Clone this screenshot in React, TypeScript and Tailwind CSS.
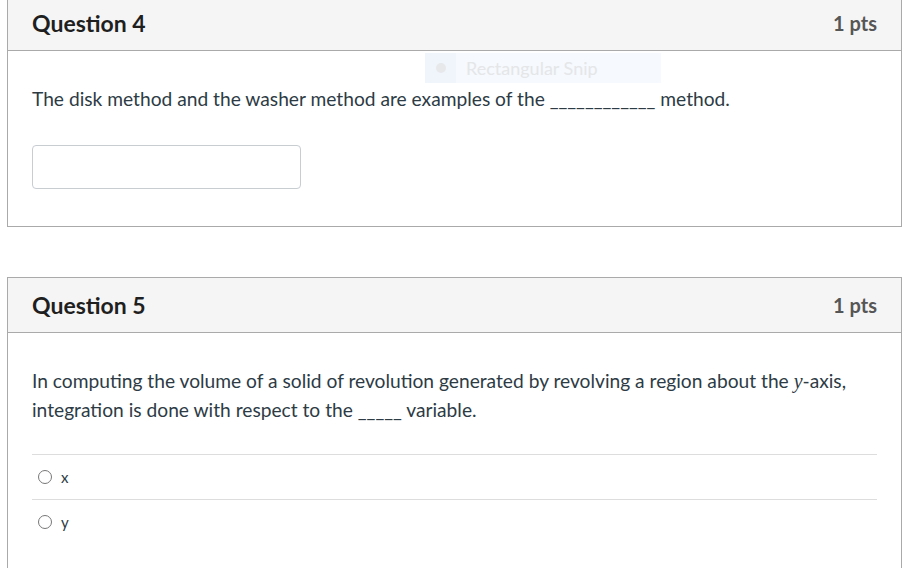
export default function App() {
  return (
    <div className="h-[568px] overflow-hidden bg-white pl-[7px] pr-[3px] font-['Lato',sans-serif] text-[#2d3b45]">
      {/* Question 4 */}
      <div className="relative -mt-[5px] border border-[#aaaaaa]">
        <div className="flex h-[55px] items-center justify-between border-b border-[#aaaaaa] bg-[#f5f5f5] px-6">
          <h3 className="text-[23px] font-bold text-[#1f1f1f]">Question 4</h3>
          <span className="text-[20px] font-bold text-[#565656]">1 pts</span>
        </div>
        <div className="px-6 pb-[37px] pt-[33px]">
          <p className="text-[19.2px] leading-[29px]">
            The disk method and the washer method are examples of the ____________ method.
          </p>
          <input
            type="text"
            className="mt-[32px] block h-[44px] w-[269px] rounded-[4px] border border-[#c7cdd1] bg-white"
          />
        </div>

        {/* snipping tool ghost */}
        <div className="absolute left-[417px] top-[57px] flex h-[30px] w-[236px] items-center bg-[#f6f9fd]">
          <div className="flex h-full w-[31px] items-center justify-center bg-[#f0f5fc]">
            <span className="block h-[10px] w-[10px] rounded-full bg-[#e6e8ea]"></span>
          </div>
          <span className="ml-[10px] text-[18px] text-[#e4e6e8]">Rectangular Snip</span>
        </div>
      </div>

      {/* Question 5 */}
      <div className="mt-[50px] border border-[#aaaaaa] pb-[40px]">
        <div className="flex h-[55px] items-center justify-between border-b border-[#aaaaaa] bg-[#f5f5f5] px-6">
          <h3 className="text-[23px] font-bold text-[#1f1f1f]">Question 5</h3>
          <span className="text-[20px] font-bold text-[#565656]">1 pts</span>
        </div>
        <div className="px-6 pt-[33px]">
          <p className="text-[19.2px] leading-[29px]">
            In computing the volume of a solid of revolution generated by revolving a region about the{" "}
            <span className="font-['Liberation_Serif',serif] text-[20px] italic leading-none">y</span>-axis,
            integration is done with respect to the _____ variable.
          </p>
          <div className="mt-[30px]">
            {["x", "y"].map((o) => (
              <label key={o} className="flex h-[45px] items-center border-t border-[#dddddd] pl-[6px]">
                <span className="block h-[14px] w-[14px] rounded-full border border-[#777777] bg-white"></span>
                <span className="ml-[9px] text-[15px] text-[#2d3b45]">{o}</span>
              </label>
            ))}
          </div>
        </div>
      </div>
    </div>
  );
}
